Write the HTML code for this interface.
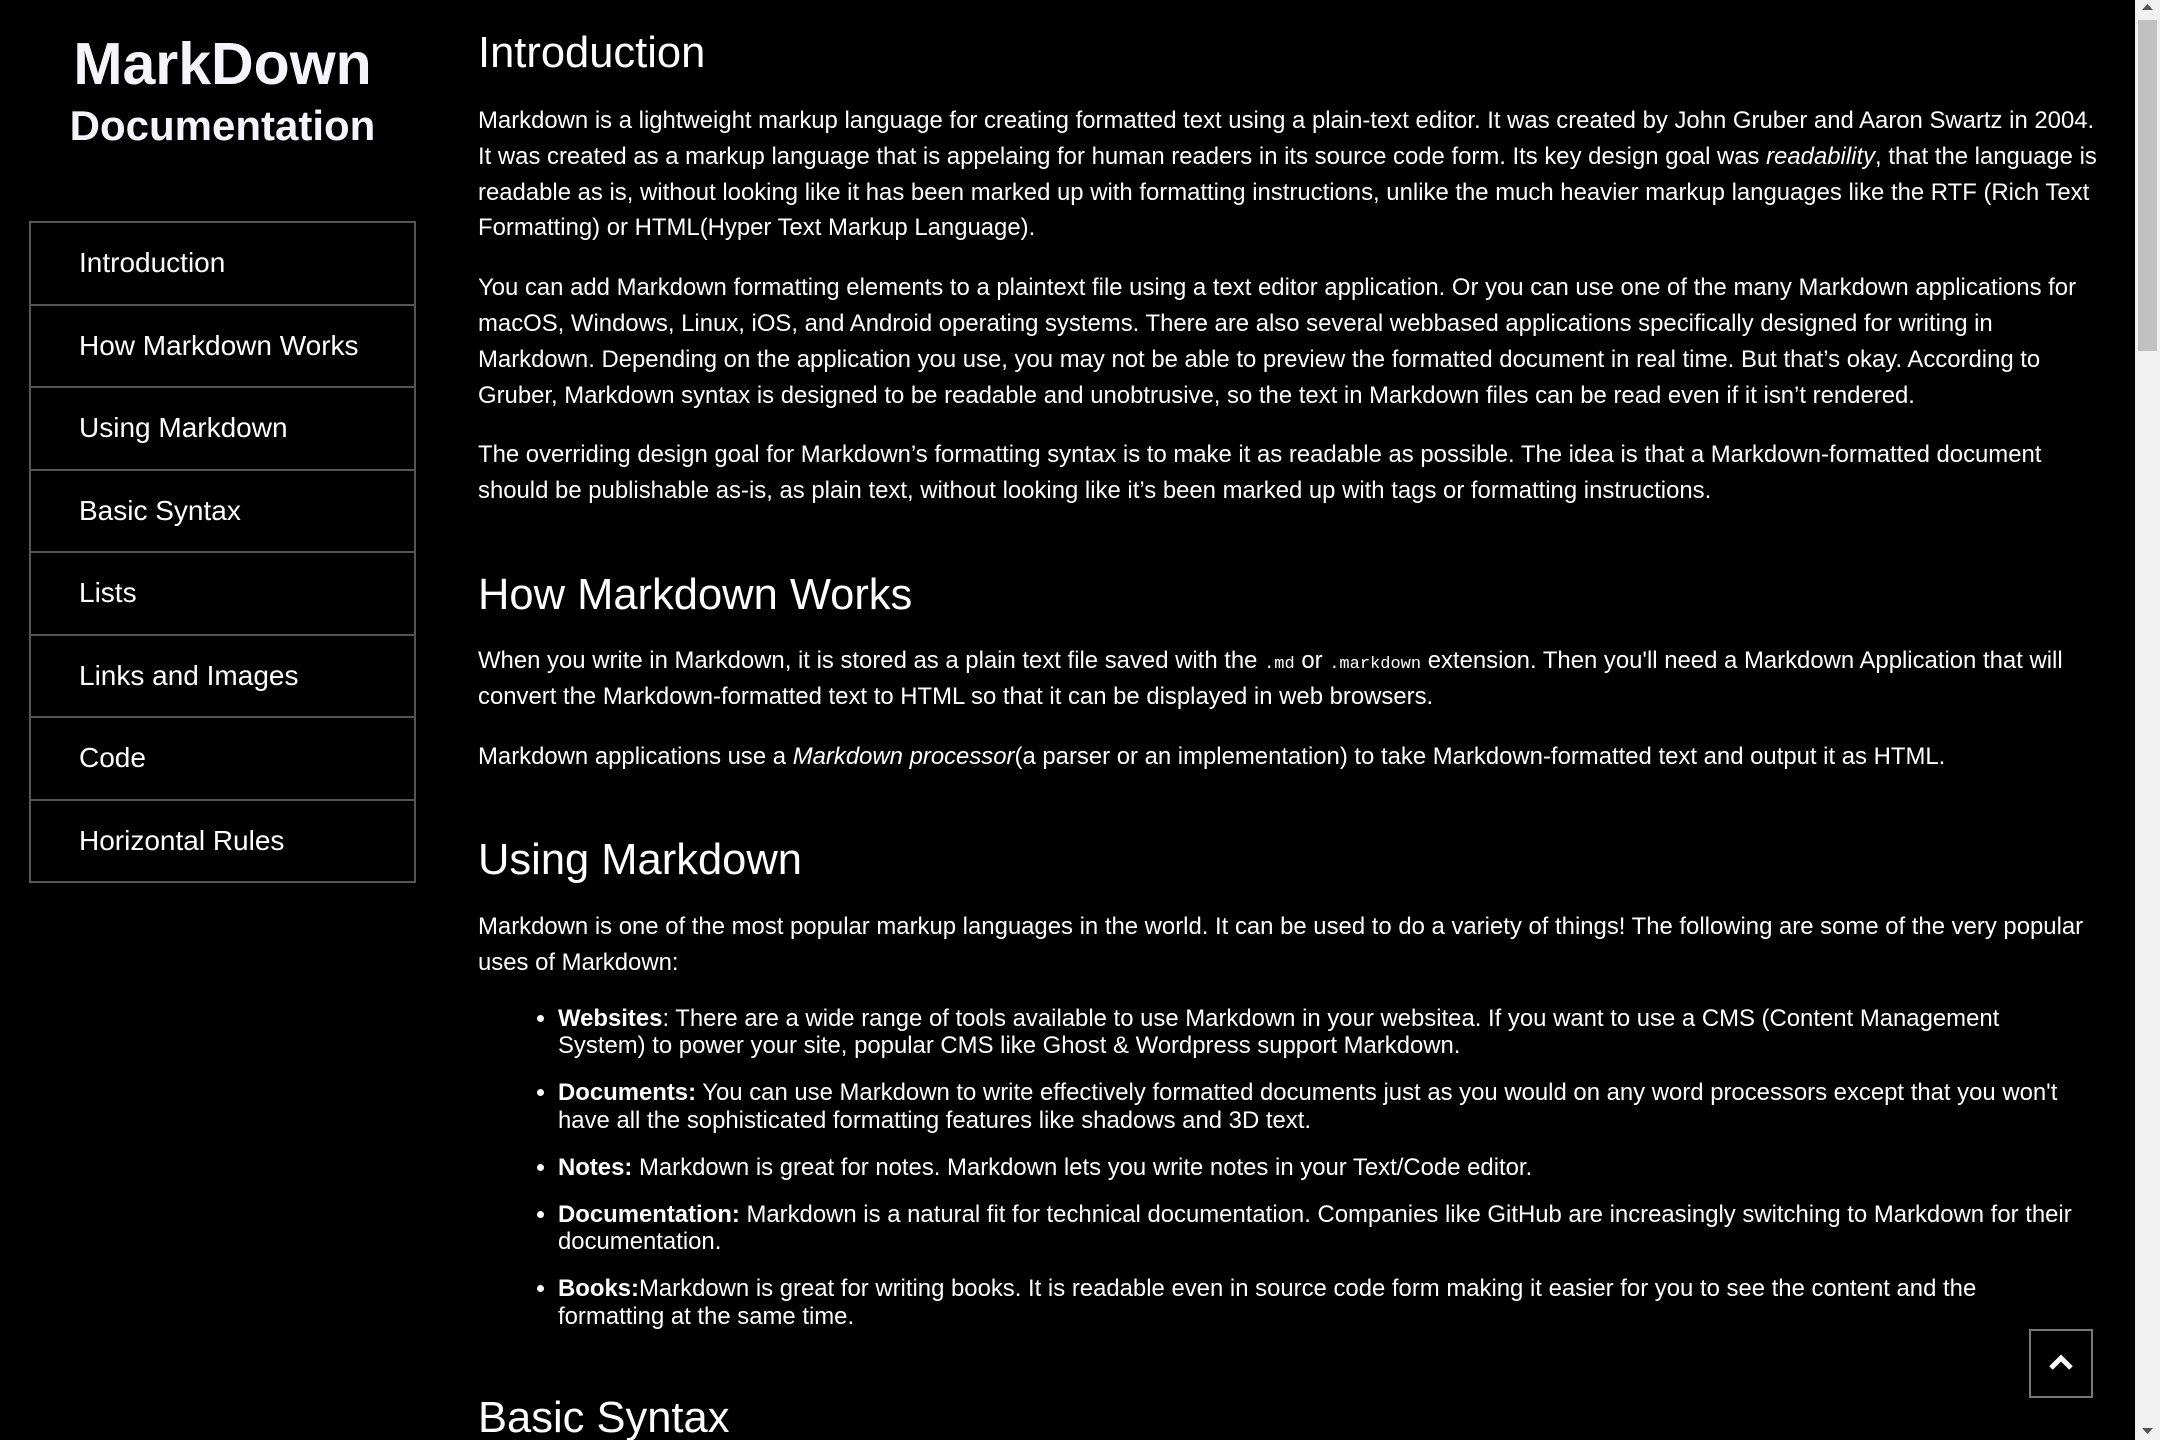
<!DOCTYPE html>
<html><head><meta charset="utf-8"><style>
html,body{margin:0;padding:0;background:#000;color:#fff;font-family:"Liberation Sans",Arial,sans-serif;overflow:hidden}
body{width:2160px;height:1440px;position:relative}
#side{position:absolute;left:0;top:0;width:445px}
#side .t1{position:absolute;left:0;width:445px;text-align:center;top:29px;font-size:59px;font-weight:bold;color:#f4f4fa;line-height:70px}
#side .t2{position:absolute;left:0;width:445px;text-align:center;top:100px;font-size:42px;font-weight:bold;color:#f4f4fa;line-height:52px}
#nav{position:absolute;left:29px;top:221px;width:383px;border:2px solid #555;border-bottom:none}
#nav div{height:80.5px;border-bottom:2px solid #555;font-size:28px;line-height:80px;padding-left:48px;color:#fff}
#main{position:absolute;left:478px;top:0;width:1628px;font-size:23.9px;line-height:35.8px}
h2{font-weight:normal;font-size:43.5px;line-height:52px;margin:0}
p{margin:0 0 24px 0}
ul{margin:24px 0 0 0;padding-left:80px;padding-right:20px;line-height:27.5px}
li{margin-bottom:19.5px}
code{font-family:"Liberation Mono",monospace;font-size:17px;line-height:0}
#sb{position:absolute;right:0;top:0;width:25px;height:1440px;background:#f1f1f1}
#thumb{position:absolute;left:3px;top:20px;width:19px;height:331px;background:#c1c1c1}
#top{position:absolute;left:2029px;top:1329px;width:64px;height:69px;border:2px solid #777;box-sizing:border-box}
</style></head><body>
<div id="side"><div class="t1">MarkDown</div><div class="t2">Documentation</div>
<div id="nav"><div>Introduction</div><div>How Markdown Works</div><div>Using Markdown</div><div>Basic Syntax</div><div>Lists</div><div>Links and Images</div><div>Code</div><div>Horizontal Rules</div></div></div>
<div id="main">
<h2 style="margin-top:27px">Introduction</h2>
<p style="margin-top:24px">Markdown is a lightweight markup language for creating formatted text using a plain-text editor. It was created by John Gruber and Aaron Swartz in 2004. It was created as a markup language that is appelaing for human readers in its source code form. Its key design goal was <i>readability</i>, that the language is readable as is, without looking like it has been marked up with formatting instructions, unlike the much heavier markup languages like the RTF (Rich Text Formatting) or HTML(Hyper Text Markup Language).</p>
<p>You can add Markdown formatting elements to a plaintext file using a text editor application. Or you can use one of the many Markdown applications for macOS, Windows, Linux, iOS, and Android operating systems. There are also several webbased applications specifically designed for writing in Markdown. Depending on the application you use, you may not be able to preview the formatted document in real time. But that’s okay. According to Gruber, Markdown syntax is designed to be readable and unobtrusive, so the text in Markdown files can be read even if it isn’t rendered.</p>
<p>The overriding design goal for Markdown’s formatting syntax is to make it as readable as possible. The idea is that a Markdown-formatted document should be publishable as-is, as plain text, without looking like it’s been marked up with tags or formatting instructions.</p>
<h2 style="margin-top:60px">How Markdown Works</h2>
<p style="margin-top:22px">When you write in Markdown, it is stored as a plain text file saved with the <code>.md</code> or <code>.markdown</code> extension. Then you'll need a Markdown Application that will convert the Markdown-formatted text to HTML so that it can be displayed in web browsers.</p>
<p>Markdown applications use a <i>Markdown processor</i>(a parser or an implementation) to take Markdown-formatted text and output it as HTML.</p>
<h2 style="margin-top:60px">Using Markdown</h2>
<p style="margin-top:23px;margin-bottom:0">Markdown is one of the most popular markup languages in the world. It can be used to do a variety of things! The following are some of the very popular uses of Markdown:</p>
<ul>
<li><b>Websites</b>: There are a wide range of tools available to use Markdown in your websitea. If you want to use a CMS (Content Management System) to power your site, popular CMS like Ghost &amp; Wordpress support Markdown.</li>
<li><b>Documents:</b> You can use Markdown to write effectively formatted documents just as you would on any word processors except that you won't have all the sophisticated formatting features like shadows and 3D text.</li>
<li><b>Notes:</b> Markdown is great for notes. Markdown lets you write notes in your Text/Code editor.</li>
<li><b>Documentation:</b> Markdown is a natural fit for technical documentation. Companies like GitHub are increasingly switching to Markdown for their documentation.</li>
<li><b>Books:</b>Markdown is great for writing books. It is readable even in source code form making it easier for you to see the content and the formatting at the same time.</li>
</ul>
<h2 style="margin-top:62px">Basic Syntax</h2>
</div>
<div id="top"><svg width="60" height="65" viewBox="0 0 60 65"><path d="M20 37 L30 27 L40 37" stroke="#fff" stroke-width="5" fill="none"/></svg></div>
<div id="sb"><div id="thumb"></div>
<svg style="position:absolute;left:6px;top:3px" width="13" height="8"><path d="M1 7 L6.5 1 L12 7Z" fill="#555"/></svg>
<svg style="position:absolute;left:6px;bottom:5px" width="13" height="8"><path d="M1 1 L6.5 7 L12 1Z" fill="#555"/></svg></div>
</body></html>
